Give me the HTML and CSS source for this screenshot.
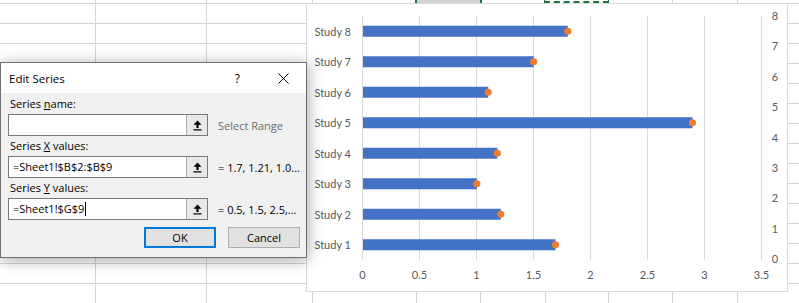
FILE: index.html
```html
<!doctype html>
<html lang="en">
	<head>
		<meta charset="UTF-8">
		<title>Edit Series</title>
		<link rel="stylesheet" href="styles.css">
	</head>
	<body>
		<div class="sheet">
			<div class="sel"></div>
			<div class="copy"></div>

			<div class="chart">
				<svg width="480" height="287" viewBox="307 4 480 287">
					<g class="grid">
						<line x1="362.5" y1="16" x2="362.5" y2="260"/>
						<line x1="419.5" y1="16" x2="419.5" y2="260"/>
						<line x1="476.5" y1="16" x2="476.5" y2="260"/>
						<line x1="533.5" y1="16" x2="533.5" y2="260"/>
						<line x1="590.5" y1="16" x2="590.5" y2="260"/>
						<line x1="647.5" y1="16" x2="647.5" y2="260"/>
						<line x1="704.5" y1="16" x2="704.5" y2="260"/>
						<line x1="761.5" y1="16" x2="761.5" y2="260"/>
					</g>
					<g class="bars">
						<rect x="363" y="25.75" width="204.8" height="11"/>
						<rect x="363" y="56.25" width="170.7" height="11"/>
						<rect x="363" y="86.75" width="125.2" height="11"/>
						<rect x="363" y="117.25" width="329.5" height="11"/>
						<rect x="363" y="147.75" width="134.3" height="11"/>
						<rect x="363" y="178.25" width="113.8" height="11"/>
						<rect x="363" y="208.75" width="137.7" height="11"/>
						<rect x="363" y="239.25" width="192.5" height="11"/>
					</g>
					<g class="dots">
						<circle cx="567.8" cy="31.25" r="3.6"/>
						<circle cx="533.7" cy="61.75" r="3.6"/>
						<circle cx="488.2" cy="92.25" r="3.6"/>
						<circle cx="692.5" cy="122.75" r="3.6"/>
						<circle cx="497.3" cy="153.25" r="3.6"/>
						<circle cx="476.8" cy="183.75" r="3.6"/>
						<circle cx="500.7" cy="214.25" r="3.6"/>
						<circle cx="555.5" cy="244.75" r="3.6"/>
					</g>
					<g class="lbl cat">
						<text x="351" y="35.5">Study 8</text>
						<text x="351" y="66">Study 7</text>
						<text x="351" y="96.5">Study 6</text>
						<text x="351" y="127">Study 5</text>
						<text x="351" y="157.5">Study 4</text>
						<text x="351" y="188">Study 3</text>
						<text x="351" y="218.5">Study 2</text>
						<text x="351" y="249">Study 1</text>
					</g>
					<g class="lbl num">
						<text x="362.5" y="279">0</text>
						<text x="419.5" y="279">0.5</text>
						<text x="476.5" y="279">1</text>
						<text x="533.5" y="279">1.5</text>
						<text x="590.5" y="279">2</text>
						<text x="647.5" y="279">2.5</text>
						<text x="704.5" y="279">3</text>
						<text x="761.5" y="279">3.5</text>
					</g>
					<g class="lbl num">
						<text x="775" y="20">8</text>
						<text x="775" y="50.4">7</text>
						<text x="775" y="80.8">6</text>
						<text x="775" y="111.1">5</text>
						<text x="775" y="141.5">4</text>
						<text x="775" y="171.9">3</text>
						<text x="775" y="202.3">2</text>
						<text x="775" y="232.6">1</text>
						<text x="775" y="263">0</text>
					</g>
				</svg>
			</div>

			<div class="dlg">
				<div class="title">
					<span>Edit Series</span>
					<span class="help">?</span>
					<svg class="close" width="11" height="11" viewBox="0 0 11 11">
						<path d="M0.5 0.5 L10.5 10.5 M10.5 0.5 L0.5 10.5"/>
					</svg>
				</div>
				<div class="body">
					<div class="lab">Series <u>n</u>ame:</div>
					<div class="row">
						<div class="field">
							<div class="val"></div>
							<div class="pick"><svg width="9" height="11" viewBox="0 0 9 11"><path d="M4.5 0.5 L8.5 4.8 H5.6 V8 H3.4 V4.8 H0.5 Z M0.5 9.3 H8.5 V10.6 H0.5 Z"/></svg></div>
						</div>
						<div class="note dim">Select Range</div>
					</div>
					<div class="lab">Series <u>X</u> values:</div>
					<div class="row">
						<div class="field">
							<div class="val">=Sheet1!$B$2:$B$9</div>
							<div class="pick"><svg width="9" height="11" viewBox="0 0 9 11"><path d="M4.5 0.5 L8.5 4.8 H5.6 V8 H3.4 V4.8 H0.5 Z M0.5 9.3 H8.5 V10.6 H0.5 Z"/></svg></div>
						</div>
						<div class="note">= 1.7, 1.21, 1.0...</div>
					</div>
					<div class="lab">Series <u>Y</u> values:</div>
					<div class="row">
						<div class="field">
							<div class="val">=Sheet1!$G$9<span class="caret"></span></div>
							<div class="pick"><svg width="9" height="11" viewBox="0 0 9 11"><path d="M4.5 0.5 L8.5 4.8 H5.6 V8 H3.4 V4.8 H0.5 Z M0.5 9.3 H8.5 V10.6 H0.5 Z"/></svg></div>
						</div>
						<div class="note">= 0.5, 1.5, 2.5,...</div>
					</div>
					<div class="btns">
						<div class="btn ok">OK</div>
						<div class="btn">Cancel</div>
					</div>
				</div>
			</div>
		</div>
	</body>
</html>
```

FILE: styles.css
```css
html,body,div,span {
	margin: 0;
	padding: 0;
	box-sizing: border-box;
}
body {
	width: 799px;
	height: 303px;
	overflow: hidden;
	background: #fff;
}
.sheet {
	position: relative;
	width: 799px;
	height: 303px;
	background:
		linear-gradient(#d4d4d4,#d4d4d4) 95px 0 / 1px 100% no-repeat,
		linear-gradient(#d4d4d4,#d4d4d4) 206px 0 / 1px 100% no-repeat,
		linear-gradient(#d4d4d4,#d4d4d4) 312px 0 / 1px 100% no-repeat,
		linear-gradient(#d4d4d4,#d4d4d4) 416px 0 / 1px 100% no-repeat,
		linear-gradient(#d4d4d4,#d4d4d4) 480px 0 / 1px 100% no-repeat,
		linear-gradient(#d4d4d4,#d4d4d4) 545px 0 / 1px 100% no-repeat,
		linear-gradient(#d4d4d4,#d4d4d4) 608px 0 / 1px 100% no-repeat,
		linear-gradient(#d4d4d4,#d4d4d4) 672px 0 / 1px 100% no-repeat,
		linear-gradient(#d4d4d4,#d4d4d4) 737px 0 / 1px 100% no-repeat,
		repeating-linear-gradient(to bottom, transparent 0 19px, #d4d4d4 19px 20px) 0 -16px / 100% 340px no-repeat;
}
/* selected cell + copy marquee peeking above the chart */
.sel {
	position: absolute;
	left: 415px;
	top: 0;
	width: 67px;
	height: 3px;
	background: #d2d2d2;
	border-left: 2px solid #217346;
	border-right: 2px solid #217346;
}
.copy {
	position: absolute;
	left: 544px;
	top: 0;
	width: 65px;
	height: 3px;
	border: 1px solid #217346;
	border-top: 0;
	border-bottom: 2px dashed #217346;
}

.chart {
	position: absolute;
	left: 306px;
	top: 3px;
	width: 482px;
	height: 289px;
	border: 1px solid #d9d9d9;
	background: #fff;
}
.chart svg {
	display: block;
}
.grid line {
	stroke: #d9d9d9;
	stroke-width: 1;
}
.bars rect {
	fill: #4472c4;
}
.dots circle {
	fill: #ed7d31;
}
.lbl text {
	font-family: Lato, "Open Sans", sans-serif;
	font-size: 11px;
	fill: #595959;
}
.cat text {
	text-anchor: end;
}
.num text {
	text-anchor: middle;
}

.dlg {
	position: absolute;
	left: 0;
	top: 62px;
	width: 307px;
	border: 1px solid #6f6f6f;
	background: #f0f0f0;
	box-shadow: 1px 2px 14px rgba(0,0,0,.35);
	font-family: "Segoe UI", "Open Sans", sans-serif;
	font-size: 11px;
	color: #000;
}
.title {
	height: 30px;
	background: #fff;
	display: flex;
	align-items: center;
	padding-left: 8px;
	font-size: 11.5px;
}
.help {
	margin-left: auto;
	font-size: 12px;
}
.close {
	margin: 0 17px 0 38px;
}
.close path {
	stroke: #000;
	stroke-width: 1;
	fill: none;
}
.body {
	padding: 3px 6px 9px 7px;
}
.lab {
	height: 16px;
	line-height: 16px;
	padding-left: 2px;
}
.row {
	display: flex;
	align-items: center;
	height: 22px;
	margin: 2px 0;
}
.field {
	width: 200px;
	height: 22px;
	display: flex;
	border: 1px solid #7a7a7a;
	background: #fff;
}
.val {
	flex: 1;
	line-height: 20px;
	padding-left: 4px;
	white-space: nowrap;
}
.caret {
	display: inline-block;
	width: 1px;
	height: 14px;
	background: #000;
	vertical-align: -3px;
	margin-left: 1px;
}
.pick {
	width: 21px;
	border-left: 1px solid #adadad;
	background: #e8e8e8;
	display: flex;
	align-items: center;
	justify-content: center;
}
.pick path {
	fill: #000;
}
.note {
	margin-left: 10px;
	white-space: nowrap;
}
.dim {
	color: #6d6d6d;
}
.btns {
	display: flex;
	justify-content: flex-end;
	gap: 12px;
	margin-top: 7px;
}
.btn {
	width: 72px;
	height: 21px;
	line-height: 19px;
	text-align: center;
	background: #e1e1e1;
	border: 1px solid #adadad;
}
.ok {
	border: 2px solid #0078d7;
	line-height: 17px;
}
```
